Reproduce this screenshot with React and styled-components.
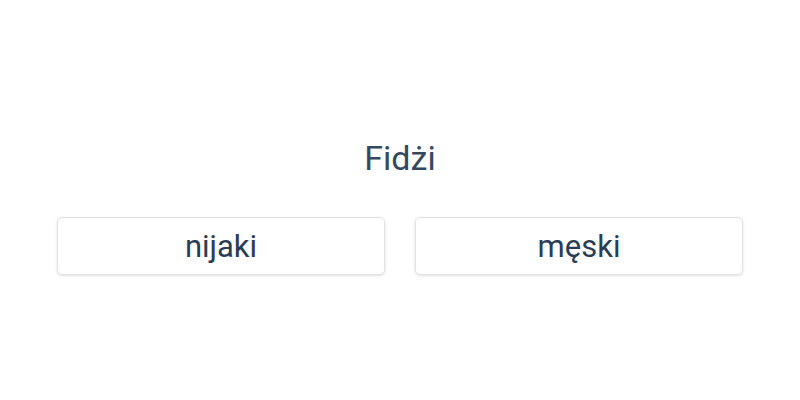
import React from 'react'
import styled, { createGlobalStyle } from 'styled-components'

const GlobalStyle = createGlobalStyle`
    body {
        margin: 0;
        background: #fff;
        font-family: Roboto, "Liberation Sans", sans-serif;
        color: #2c3e50;
    }
`

const Page = styled.div`
    height: 400px;
    display: flex;
    flex-direction: column;
    align-items: center;
    padding-top: 136px;
    box-sizing: border-box;
`

const Word = styled.div`
    font-size: 34px;
    line-height: 44px;
    text-align: center;
    color: #34495e;
`

const Answers = styled.div`
    display: grid;
    grid-template-columns: 328px 328px;
    gap: 30px;
    margin-top: 37px;
`

const Answer = styled.button`
    height: 58px;
    background: #fff;
    border: 1px solid #e2e2e2;
    border-radius: 5px;
    box-shadow: 0 1px 3px rgba(0, 0, 0, 0.12);
    font-family: inherit;
    font-size: 31px;
    color: #293d56;
    cursor: pointer;
    padding: 0;
`

export default function App() {
    const options = ['nijaki', 'męski']
    return <>
        <GlobalStyle />
        <Page>
            <Word>Fidżi</Word>
            <Answers>
                {options.map(o => <Answer key={o}>{o}</Answer>)}
            </Answers>
        </Page>
    </>
}
